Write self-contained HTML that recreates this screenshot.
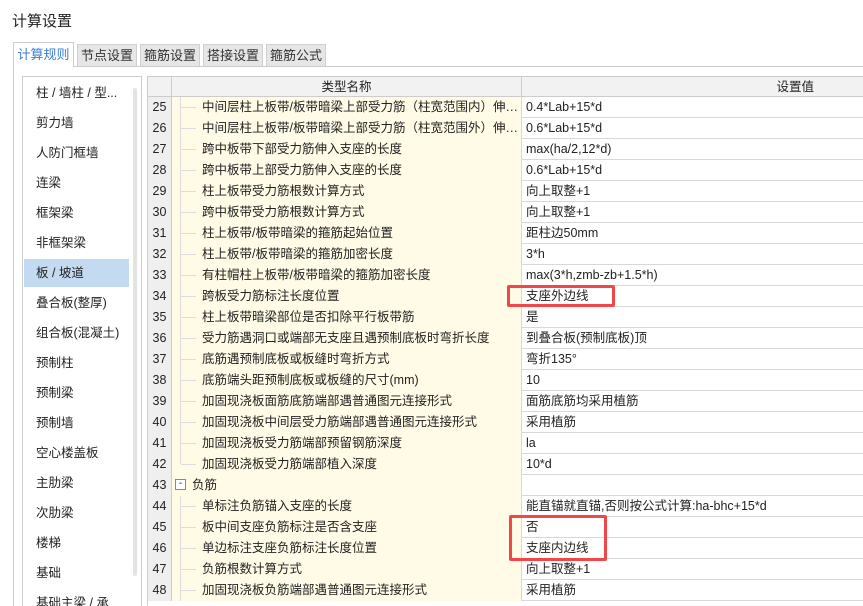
<!DOCTYPE html><html><head><meta charset="utf-8"><style>
*{margin:0;padding:0;box-sizing:border-box}
body{width:863px;height:603px;overflow:hidden;background:#fff;font-family:"Liberation Sans","Noto Sans CJK SC",sans-serif;font-size:12.5px;color:#222;position:relative}
.abs{position:absolute}
.title{left:12px;top:10px;font-size:15px}
.tab{top:44px;height:22px;background:#e6e6e6;border:1px solid #d0d0d0;border-bottom:none;font-size:13px;line-height:21px;text-align:center;color:#333}
.tab.act{background:#fff;color:#3a7fd0;top:42px;height:25px;border-color:#ccc;line-height:23px}
.pane{left:13px;top:66px;width:860px;height:540px;border:1px solid #ccc;border-right:none;border-bottom:none}
.list{left:22px;top:76px;width:120px;height:530px;border:1px solid #ccc;border-bottom:none;overflow:hidden}
.li{position:absolute;left:1px;width:105px;height:28px;line-height:28px;padding-left:12px;font-size:12.5px}
.li.sel{background:#c4daf0}
.sb{left:133px;top:88px;width:4px;height:488px;background:#e3e3e3;border-radius:2px}
.grid{left:147px;top:76px;width:716px;height:530px;border-top:1px solid #ccc;border-left:1px solid #ccc}
.hdr{position:absolute;top:0;height:20px;background:#f2f2f2;border-bottom:1px solid #ccc;line-height:20px;text-align:center}
.row{position:absolute;left:0;width:716px;height:21px;border-bottom:1px solid #d8d8d8}
.n{position:absolute;left:0;width:24px;height:21px;background:#efefef;border-right:1px solid #ccc;text-align:center;line-height:20px}
.nm{position:absolute;left:24px;width:350px;height:21px;background:#fffbe6;border-right:1px solid #d8d8d8;line-height:20px;white-space:nowrap;overflow:hidden}
.nm .t{position:absolute;left:30px;right:2px;overflow:hidden;text-overflow:ellipsis}
.nm .v{position:absolute;left:8px;top:0;width:1px;height:21px;background:#ddd}
.nm .h{position:absolute;left:9px;top:10px;width:15px;height:1px;background:#ddd}
.val{position:absolute;left:374px;width:342px;padding-left:4px;line-height:20px;white-space:nowrap}
.red{border:3px solid #f04848;border-radius:2px}
</style></head><body>
<div class="abs title">计算设置</div>
<div class="abs pane"></div>
<div class="abs tab act" style="left:13px;width:61px">计算规则</div>
<div class="abs tab" style="left:77px;width:60px">节点设置</div>
<div class="abs tab" style="left:140px;width:60px">箍筋设置</div>
<div class="abs tab" style="left:203px;width:60px">搭接设置</div>
<div class="abs tab" style="left:266px;width:60px">箍筋公式</div>
<div class="abs list">
<div class="li" style="top:2px">柱 / 墙柱 / 型...</div>
<div class="li" style="top:32px">剪力墙</div>
<div class="li" style="top:62px">人防门框墙</div>
<div class="li" style="top:92px">连梁</div>
<div class="li" style="top:122px">框架梁</div>
<div class="li" style="top:152px">非框架梁</div>
<div class="li sel" style="top:182px">板 / 坡道</div>
<div class="li" style="top:212px">叠合板(整厚)</div>
<div class="li" style="top:242px">组合板(混凝土)</div>
<div class="li" style="top:272px">预制柱</div>
<div class="li" style="top:302px">预制梁</div>
<div class="li" style="top:332px">预制墙</div>
<div class="li" style="top:362px">空心楼盖板</div>
<div class="li" style="top:392px">主肋梁</div>
<div class="li" style="top:422px">次肋梁</div>
<div class="li" style="top:452px">楼梯</div>
<div class="li" style="top:482px">基础</div>
<div class="li" style="top:512px">基础主梁 / 承</div>
</div>
<div class="abs sb"></div>
<div class="abs grid">
<div class="hdr" style="left:0;width:24px;border-right:1px solid #ccc"></div>
<div class="hdr" style="left:24px;width:350px;border-right:1px solid #ccc">类型名称</div>
<div class="hdr" style="left:374px;width:342px;text-align:right;padding-right:50px">设置值</div>
<div id="rows"></div>
</div>
<div class="abs red" style="left:507px;top:285px;width:108px;height:22px"></div>
<div class="abs red" style="left:509px;top:515px;width:98px;height:46px"></div>
<script>
var d=[[25,"中间层柱上板带/板带暗梁上部受力筋（柱宽范围内）伸入支座长度","0.4*Lab+15*d"],[26,"中间层柱上板带/板带暗梁上部受力筋（柱宽范围外）伸入支座长度","0.6*Lab+15*d"],[27,"跨中板带下部受力筋伸入支座的长度","max(ha/2,12*d)"],[28,"跨中板带上部受力筋伸入支座的长度","0.6*Lab+15*d"],[29,"柱上板带受力筋根数计算方式","向上取整+1"],[30,"跨中板带受力筋根数计算方式","向上取整+1"],[31,"柱上板带/板带暗梁的箍筋起始位置","距柱边50mm"],[32,"柱上板带/板带暗梁的箍筋加密长度","3*h"],[33,"有柱帽柱上板带/板带暗梁的箍筋加密长度","max(3*h,zmb-zb+1.5*h)"],[34,"跨板受力筋标注长度位置","支座外边线"],[35,"柱上板带暗梁部位是否扣除平行板带筋","是"],[36,"受力筋遇洞口或端部无支座且遇预制底板时弯折长度","到叠合板(预制底板)顶"],[37,"底筋遇预制底板或板缝时弯折方式","弯折135°"],[38,"底筋端头距预制底板或板缝的尺寸(mm)","10"],[39,"加固现浇板面筋底筋端部遇普通图元连接形式","面筋底筋均采用植筋"],[40,"加固现浇板中间层受力筋端部遇普通图元连接形式","采用植筋"],[41,"加固现浇板受力筋端部预留钢筋深度","la"],[42,"加固现浇板受力筋端部植入深度","10*d"],[43,"负筋",""],[44,"单标注负筋锚入支座的长度","能直锚就直锚,否则按公式计算:ha-bhc+15*d"],[45,"板中间支座负筋标注是否含支座","否"],[46,"单边标注支座负筋标注长度位置","支座内边线"],[47,"负筋根数计算方式","向上取整+1"],[48,"加固现浇板负筋端部遇普通图元连接形式","采用植筋"]];
var h="";d.forEach(function(r,i){var top=20+i*21;var nm;
if(r[0]==43){nm='<span style="position:absolute;left:3px;top:4px;width:11px;height:11px;border:1px solid #888;background:#fff;font-size:10px;line-height:8px;text-align:center">-</span><span class="t" style="left:20px">负筋</span>';}
else nm='<span class="v"'+(r[0]==42?' style="height:10px"':'')+'></span><span class="h"></span><span class="t">'+r[1]+'</span>';
h+='<div class="row" style="top:'+top+'px"><div class="n">'+r[0]+'</div><div class="nm">'+nm+'</div><div class="val">'+r[2]+'</div></div>';});
document.getElementById("rows").innerHTML=h;
</script>
</body></html>
